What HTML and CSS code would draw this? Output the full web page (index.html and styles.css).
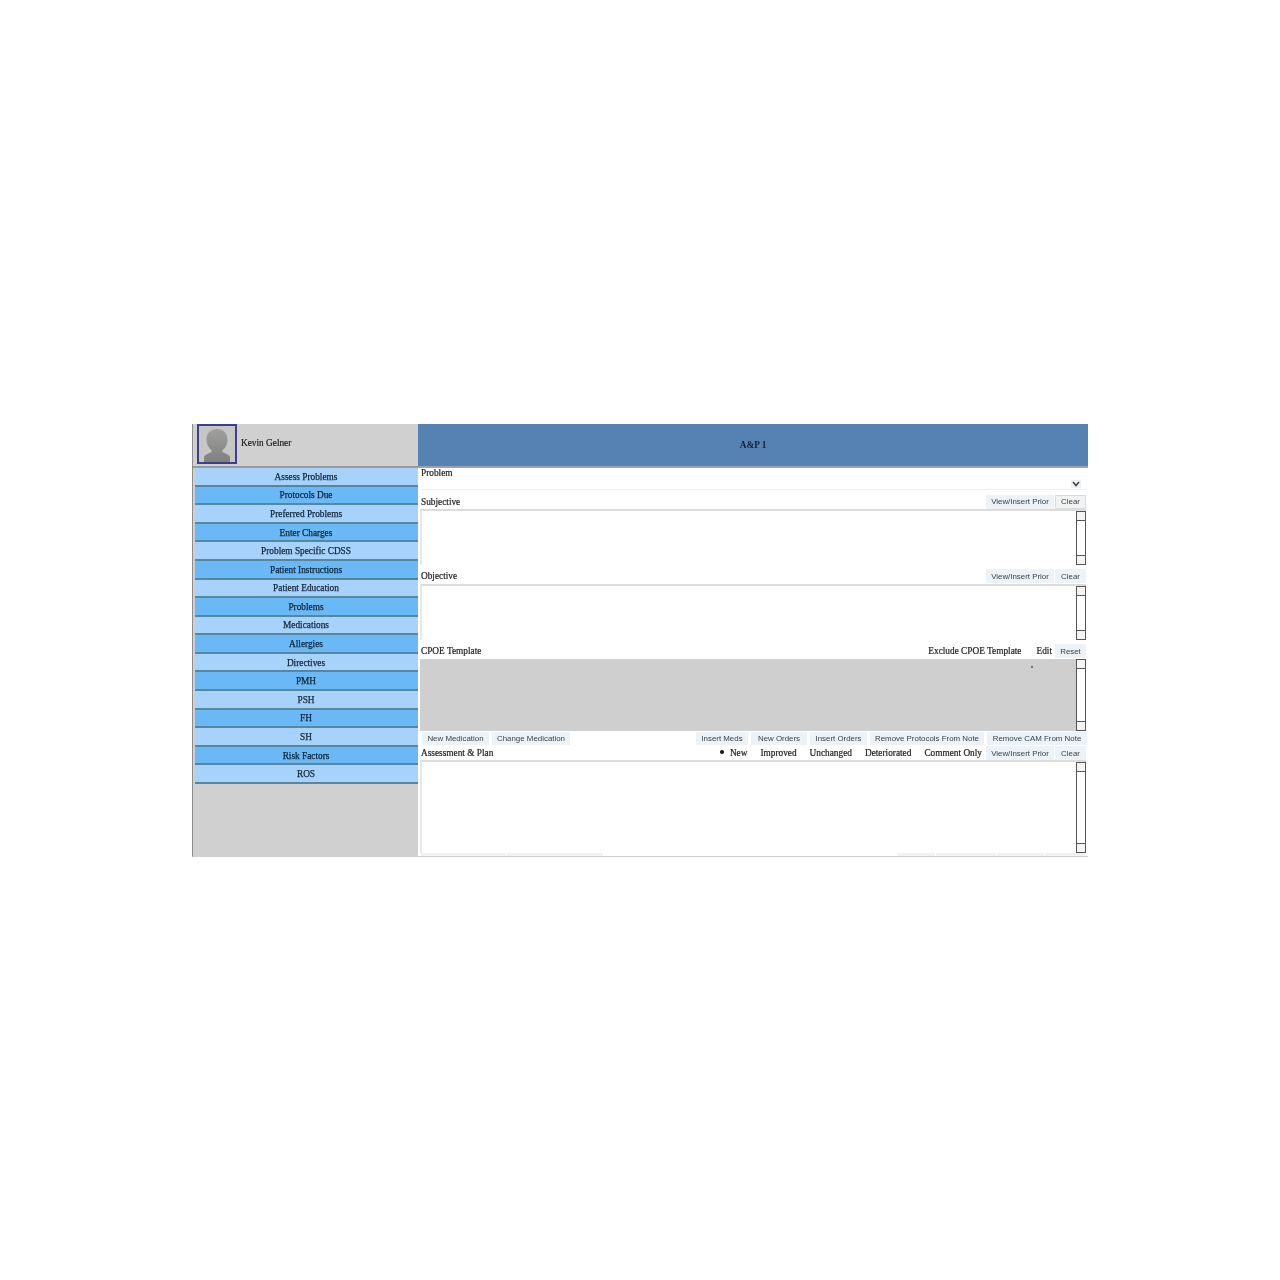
FILE: index.html
```html
<!DOCTYPE html>
<html lang="en">
<head>
<meta charset="utf-8">
<title>A&amp;P 1</title>
<link rel="stylesheet" href="styles.css">
</head>
<body>
<div class="app">
  <aside class="side">
    <div class="user">
      <div class="avatar">
        <svg viewBox="0 0 36 36" width="36" height="36" aria-hidden="true">
          <defs>
            <linearGradient id="sil" x1="0" y1="0" x2="0" y2="1">
              <stop offset="0" stop-color="#a09f9d"/>
              <stop offset="1" stop-color="#7f817f"/>
            </linearGradient>
          </defs>
          <rect width="36" height="36" fill="#c6c6c3"/>
          <path d="M18 3c6.500 0 10.500 4.500 10.500 10.500 0 4.500-2 8.500-5 10.500v2c2.500 1.500 7 2.500 7.500 5v5H5v-5c.5-2.500 5-3.500 7.500-5v-2c-3-2-5-6-5-10.500C7.500 7.500 11.500 3 18 3z" fill="url(#sil)"/>
        </svg>
      </div>
      <span class="user-name">Kevin Gelner</span>
    </div>
    <nav class="nav">
      <a class="nav-item">Assess Problems</a>
      <a class="nav-item alt">Protocols Due</a>
      <a class="nav-item">Preferred Problems</a>
      <a class="nav-item alt">Enter Charges</a>
      <a class="nav-item">Problem Specific CDSS</a>
      <a class="nav-item alt">Patient Instructions</a>
      <a class="nav-item">Patient Education</a>
      <a class="nav-item alt">Problems</a>
      <a class="nav-item">Medications</a>
      <a class="nav-item alt">Allergies</a>
      <a class="nav-item">Directives</a>
      <a class="nav-item alt">PMH</a>
      <a class="nav-item">PSH</a>
      <a class="nav-item alt">FH</a>
      <a class="nav-item">SH</a>
      <a class="nav-item alt">Risk Factors</a>
      <a class="nav-item">ROS</a>
    </nav>
  </aside>
  <main class="main">
    <header class="title">A&amp;P 1</header>
    <section class="problem">
      <div class="label">Problem</div>
      <div class="select">
        <svg class="chev" viewBox="0 0 10 8" width="10" height="8" aria-hidden="true"><path d="M2 2l3 3.500L8 2" fill="none" stroke="#444" stroke-width="1.600"/></svg>
      </div>
    </section>
    <div class="row row-subj">
      <span class="label">Subjective</span>
      <div class="btns"><button class="btn w-view">View/Insert Prior</button><button class="btn w-clear active">Clear</button></div>
    </div>
    <div class="box box-s"><div class="scroll"><i></i><i></i></div></div>
    <div class="row row-gap">
      <span class="label">Objective</span>
      <div class="btns"><button class="btn w-view">View/Insert Prior</button><button class="btn w-clear">Clear</button></div>
    </div>
    <div class="box box-s"><div class="scroll"><i></i><i></i></div></div>
    <div class="row row-gap">
      <span class="label">CPOE Template</span>
      <div class="btns cpoe-opts">
        <span class="label">Exclude CPOE Template</span>
        <span class="label">Edit</span>
        <button class="btn w-reset">Reset</button>
      </div>
    </div>
    <div class="box box-gray"><span class="dot"></span><div class="scroll"><i></i><i></i></div></div>
    <div class="toolbar">
      <div class="tool-group">
        <button class="btn w-newmed">New Medication</button>
        <button class="btn w-chgmed">Change Medication</button>
      </div>
      <div class="tool-group">
        <button class="btn w-ins">Insert Meds</button>
        <button class="btn w-new">New Orders</button>
        <button class="btn w-insord">Insert Orders</button>
        <button class="btn w-rem">Remove Protocols From Note</button>
        <button class="btn w-cam">Remove CAM From Note</button>
      </div>
    </div>
    <div class="row row-plan">
      <span class="label">Assessment &amp; Plan</span>
      <div class="btns status">
        <span class="label"><b class="bullet"></b>New</span>
        <span class="label">Improved</span>
        <span class="label">Unchanged</span>
        <span class="label">Deteriorated</span>
        <span class="label">Comment Only</span>
        <span class="pair"><button class="btn w-view">View/Insert Prior</button><button class="btn w-clear">Clear</button></span>
      </div>
    </div>
    <div class="box box-plan"><div class="scroll"><i></i><i></i></div></div>
    <div class="cutoff">
      <span class="cut cut-a"></span><span class="cut cut-b"></span>
      <span class="cut-space"></span>
      <span class="cut cut-c"></span><span class="cut cut-d"></span><span class="cut cut-e"></span><span class="cut cut-f"></span>
    </div>
  </main>
</div>
</body>
</html>
```
FILE: styles.css
```css
* { box-sizing: border-box; }
html, body { margin: 0; background: #fff; }
body { height: 1280px; padding: 424px 192px 0; }

.app {
  display: flex;
  width: 896px;
  height: 433px;
  border-left: 1px solid #8d8d8d;
  border-bottom: 1px solid #d0d0d0;
  font-family: "Liberation Serif", serif;
  color: #222;
  filter: blur(0.7px);
}

.side { width: 225px; background: #d1d0d1; flex: none; }
.user { display: flex; align-items: flex-start; height: 44px; padding-left: 4px; border-bottom: 2px solid #9a9a9a; gap: 4px; }
.avatar { width: 40px; height: 40px; border: 2px solid #3e3e90; }
.avatar svg { display: block; }
.user-name { font-size: 9.300px; line-height: 12px; margin-top: 13px; color: #222; -webkit-text-stroke: 0.2px #222; }

.nav { display: grid; grid-template-rows: repeat(17, 1fr); height: 316px; padding-left: 2px; }
.nav-item {
  display: flex; align-items: center; justify-content: center;
  padding: 1px 1px 0 0;
  background: #a7d2fb;
  border-bottom: 2px solid #55879f;
  font-size: 9.300px;
  color: #14283a;
  -webkit-text-stroke: 0.25px #14283a;
}
.nav-item.alt { background: #6bb8f6; color: #0d2336; }

.main { flex: 1; min-width: 0; display: flex; flex-direction: column; background: #fff; }
.title {
  height: 44px; flex: none;
  display: flex; align-items: center; justify-content: center;
  background: #5682b3;
  border-bottom: 2px solid #9aa3ad;
  font-size: 9.300px; font-weight: bold; color: #14222f;
}

.label { font-size: 9.300px; line-height: 12px; color: #1c1c1c; white-space: nowrap; -webkit-text-stroke: 0.2px #1c1c1c; }

.problem { height: 26px; flex: none; padding: 0 2px 0 3px; }
.problem .label { height: 10px; line-height: 10px; }
.select { height: 12px; border-bottom: 1px solid #f0f0f0; display: flex; justify-content: flex-end; align-items: center; padding-right: 5px; }
.chev { background: #eef1f3; }

.row { display: flex; justify-content: space-between; align-items: center; flex: none; padding: 0 2px 0 3px; }
.row-subj { height: 15px; }
.row-gap { height: 19px; padding-top: 3px; }
.row-plan { height: 14px; }
.btns { display: flex; align-items: center; }
.cpoe-opts { gap: 15px; }
.cpoe-opts .btn { margin-left: -12px; }
.status { gap: 13px; }
.pair { display: flex; margin-left: -10px; }

.btn {
  height: 14px; padding: 0;
  border: 0;
  background: #ecf2f6;
  font-family: "Liberation Sans", sans-serif;
  font-size: 7.900px;
  color: #36434d;
  white-space: nowrap;
  margin: 0 0 0 1px;
}
.btn.active { background: #f2f2f2; border: 1px solid #d8dde0; }
.w-view { width: 68px; }
.w-clear { width: 31px; }
.w-reset { width: 31px; }
.w-newmed { width: 67px; }
.w-chgmed { width: 78px; }
.w-ins { width: 52px; }
.w-new { width: 56px; }
.w-insord { width: 57px; }
.w-rem { width: 114px; }
.w-cam { width: 100px; }

.box {
  position: relative;
  flex: none;
  margin: 0 2px;
  background: #fff;
  border-top: 2px solid #dcdcdc;
  border-left: 2px solid #e8e8e8;
}
.box-s { height: 56px; }
.box-gray { height: 72px; background: #d0cfd0; border: 0; }
.box-plan { height: 93px; }

.scroll {
  position: absolute; top: 0; right: 0; bottom: 0;
  width: 10px;
  display: flex; flex-direction: column; justify-content: space-between;
  background: #fff;
  border: 1px solid #555;
}
.scroll i { display: block; height: 9px; background: #f4f4f4; }
.scroll i:first-child { border-bottom: 1px solid #555; }
.scroll i:last-child { border-top: 1px solid #555; }

.dot { position: absolute; left: 611px; top: 7px; width: 2px; height: 2px; background: #777; }

.toolbar { display: flex; justify-content: space-between; align-items: center; height: 15px; flex: none; padding: 0 1px 0 4px; }
.tool-group { display: flex; gap: 3px; }
.toolbar .btn { margin: 0; height: 13px; }

.bullet { display: inline-block; width: 4px; height: 4px; border-radius: 50%; background: #111; margin-right: 6px; vertical-align: 2px; }

.cutoff { display: flex; height: 3px; flex: none; gap: 1px; padding: 0 2px 0 3px; }
.cut { background: #eef3f6; }
.cut-a { width: 85px; }
.cut-b { width: 96px; }
.cut-space { flex: 1; }
.cut-c { width: 37px; }
.cut-d { width: 60px; }
.cut-e { width: 47px; }
.cut-f { width: 41px; }
```
